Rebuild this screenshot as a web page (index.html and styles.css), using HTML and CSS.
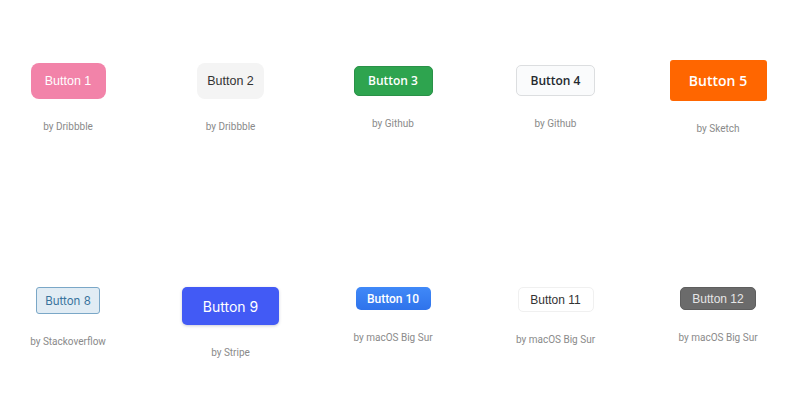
FILE: index.html
```html
<!DOCTYPE html>
<html>
<head>
<meta charset="utf-8">
<link rel="stylesheet" href="styles.css">
</head>
<body>
<div class="grid">
  <div class="cell row1"><button class="btn b1">Button 1</button><div class="by">by Dribbble</div></div>
  <div class="cell row1"><button class="btn b2">Button 2</button><div class="by">by Dribbble</div></div>
  <div class="cell row1"><button class="btn b3">Button 3</button><div class="by">by Github</div></div>
  <div class="cell row1"><button class="btn b4">Button 4</button><div class="by">by Github</div></div>
  <div class="cell row1"><button class="btn b5">Button 5</button><div class="by">by Sketch</div></div>
  <div class="cell row2"><button class="btn b8">Button 8</button><div class="by">by Stackoverflow</div></div>
  <div class="cell row2"><button class="btn b9">Button 9</button><div class="by">by Stripe</div></div>
  <div class="cell row2"><button class="btn b10">Button 10</button><div class="by">by macOS Big Sur</div></div>
  <div class="cell row2"><button class="btn b11">Button 11</button><div class="by">by macOS Big Sur</div></div>
  <div class="cell row2"><button class="btn b12">Button 12</button><div class="by">by macOS Big Sur</div></div>
</div>
</body>
</html>
```
FILE: styles.css
```css
html, body {
  margin: 0;
  padding: 0;
  background: #fff;
  overflow: hidden;
}
.grid {
  display: grid;
  grid-template-columns: repeat(5, 136px);
  grid-template-rows: 195px 205px;
  column-gap: 26.5px;
}
.cell {
  display: flex;
  flex-direction: column;
  align-items: center;
}
.row1 {
  justify-content: center;
}
.row2 {
  justify-content: flex-start;
  padding-top: 92px;
}
.by {
  margin-top: 22px;
  font-family: Roboto, "Liberation Sans", sans-serif;
  font-size: 10px;
  line-height: 12px;
  color: #8a8a8a;
}
.btn {
  box-sizing: border-box;
  margin: 0;
  border: none;
  display: flex;
  align-items: center;
  justify-content: center;
  font-family: "Liberation Sans", Arial, sans-serif;
  font-size: 12px;
  padding: 0;
}
.b1 {
  width: 75px; height: 36px;
  background: #f283a9;
  color: #fff;
  border-radius: 8px;
  font-size: 12.5px;
}
.b2 {
  width: 67px; height: 36px;
  background: #f4f4f4;
  color: #333;
  border-radius: 8px;
  font-size: 12.5px;
}
.b3 {
  width: 79px; height: 30px;
  background: #2ea44f;
  border: 1px solid #2a9148;
  color: #fff;
  border-radius: 5px;
  font-family: "Open Sans", sans-serif;
  font-weight: 600;
  font-size: 12px;
}
.b4 {
  width: 79px; height: 31px;
  background: #fafbfc;
  border: 1px solid #dcdee0;
  color: #24292e;
  border-radius: 5px;
  font-family: "Open Sans", sans-serif;
  font-weight: 600;
  font-size: 12px;
}
.b5 {
  width: 97px; height: 41px;
  background: #ff6600;
  color: #fff;
  border-radius: 3px;
  font-family: "Open Sans", sans-serif;
  font-weight: 600;
  font-size: 14px;
}
.b8 {
  width: 64px; height: 27px;
  background: #e1ecf4;
  border: 1px solid #7aa7c7;
  color: #39739d;
  border-radius: 3px;
  font-family: Inter, sans-serif;
  font-size: 11.5px;
}
.b9 {
  width: 97px; height: 38px;
  background: #425af5;
  color: #fff;
  border-radius: 5px;
  box-shadow: 0 1px 3px rgba(50, 50, 93, 0.25);
  font-family: Inter, sans-serif;
  font-size: 14px;
  font-weight: 400;
}
.b10 {
  width: 75px; height: 23px;
  background: linear-gradient(#4089f8, #2f73eb);
  color: #fff;
  border-radius: 5px;
  font-family: Roboto, sans-serif;
  font-size: 12px;
  font-weight: 500;
}
.b11 {
  width: 76px; height: 25px;
  background: #fff;
  border: 1px solid #f0f0f0;
  color: #333;
  border-radius: 5px;
  font-size: 12px;
}
.b12 {
  width: 76px; height: 23px;
  background: #6b6b6b;
  border: 1px solid #5e5e5e;
  color: #e6e6e6;
  border-radius: 5px;
  font-size: 12px;
}
```
